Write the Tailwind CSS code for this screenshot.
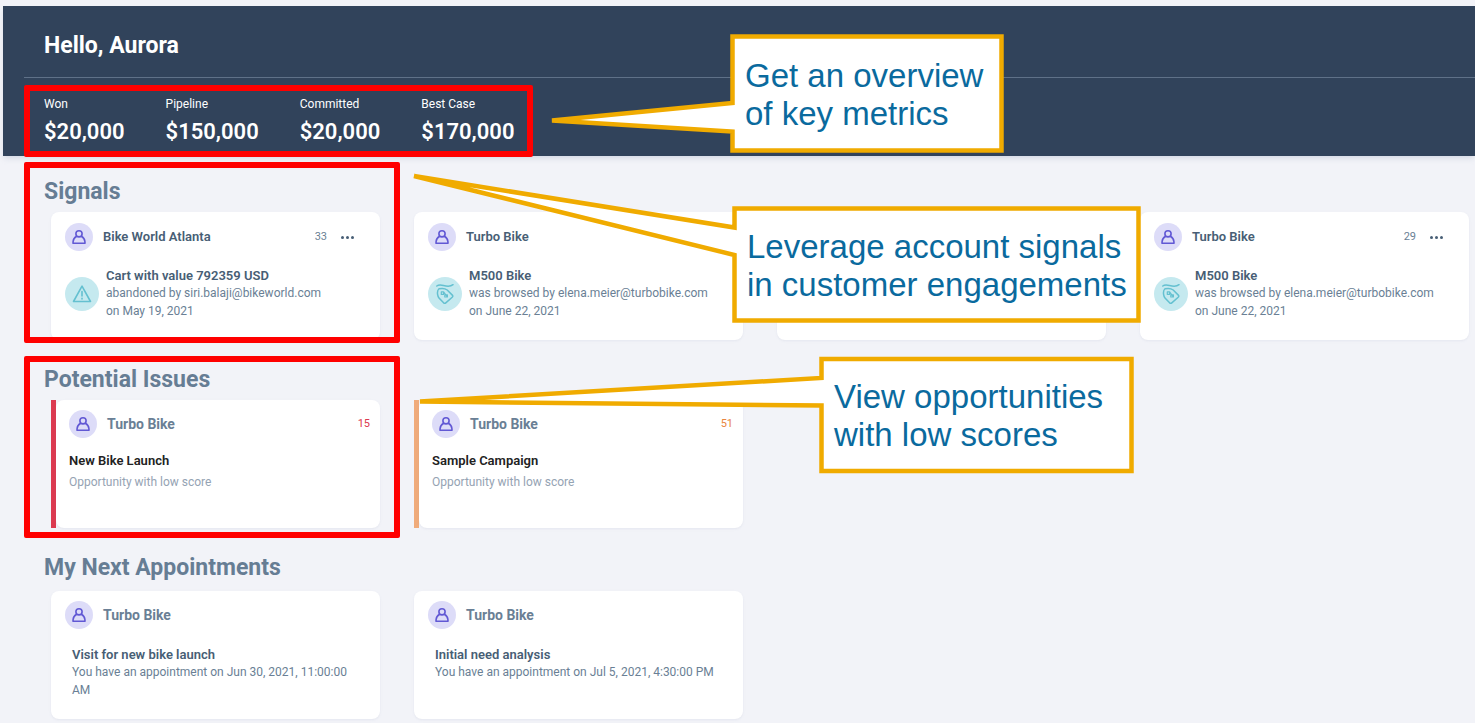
<!DOCTYPE html>
<html lang="en">
<head>
    <meta charset="UTF-8">
    <meta name="viewport" content="width=device-width, initial-scale=1.0">
    <title>Home</title>
    <script src="https://cdn.jsdelivr.net/npm/@tailwindcss/browser@4"></script>
</head>
<body class="relative min-h-screen overflow-x-hidden bg-[#f2f3f8] font-['Roboto',sans-serif] text-[#6a7f95]">
    <!-- Icons -->
    <svg class="hidden">
        <symbol id="icon-person" viewBox="0 0 16 16" fill="none" stroke="currentColor" stroke-width="1.6" stroke-linejoin="round">
            <circle cx="8" cy="4.8" r="3.1" />
            <path d="M5.700 7.200C3.700 8.200 2.300 10 2.100 12.500L2 14.300h12l-.1-1.800c-.2-2.500-1.600-4.300-3.600-5.300" />
        </symbol>
        <symbol id="icon-alert" viewBox="0 0 20 20" fill="none" stroke="currentColor" stroke-width="1.6" stroke-linejoin="round" stroke-linecap="round">
            <path d="M10 2.200 1.500 17.500h17z" />
            <path d="M10 7.500v4.500M10 14.300v.6" />
        </symbol>
        <symbol id="icon-tag" viewBox="0 0 20 20" fill="none" stroke="currentColor" stroke-width="1.500" stroke-linejoin="round" stroke-linecap="round">
            <path d="M1.800 2C3.600.6 5.600.8 8.500 1.500c4 1 7.500.8 9.500-.8" />
            <path d="M4 4.800C2.600 6 2.200 7.800 2.600 10.300c.2 1.600.5 2.600 1.400 3.600l4.600 4.900c.7.800 1.500.8 2.200.1l6.400-5.600c.8-.7.800-1.500.1-2.200L12.200 6C10.300 4.500 7 4.100 4 4.800z" />
            <path d="M6.300 10.400V7.800h2.300l3.800 5.200h-2.600v-2.200M8.600 7.800v2.600H6.300M12.400 13v-2.200h-2.600" stroke-width="1.200" />
        </symbol>
    </svg>

    <header class="relative mt-[6px] ml-[3px] h-[150px] bg-[#31435b] text-white shadow-md shadow-slate-400/20">
        <h1 class="pt-6 pl-[41px] text-[23px] leading-8 font-bold">Hello, Aurora</h1>
        <div class="mt-[15px] ml-[21px] border-t border-[#5f7188] pl-5">
            <dl class="flex gap-[41px] pt-4">
                <div>
                    <dt class="text-xs leading-5">Won</dt>
                    <dd class="mt-1 text-[22px] leading-7 font-semibold">$20,000</dd>
                </div>
                <div>
                    <dt class="text-xs leading-5">Pipeline</dt>
                    <dd class="mt-1 text-[22px] leading-7 font-semibold">$150,000</dd>
                </div>
                <div>
                    <dt class="text-xs leading-5">Committed</dt>
                    <dd class="mt-1 text-[22px] leading-7 font-semibold">$20,000</dd>
                </div>
                <div>
                    <dt class="text-xs leading-5">Best Case</dt>
                    <dd class="mt-1 text-[22px] leading-7 font-semibold">$170,000</dd>
                </div>
            </dl>
        </div>
        <div class="absolute top-[79px] left-[21px] h-[72px] w-[509px] rounded-xs border-6 border-[#ff0000]"></div>
    </header>

    <main class="pr-[6px] pb-1 pl-[51px]">
        <!-- Signals -->
        <section class="relative pt-5">
            <h2 class="-ml-[7px] mb-1 text-[23px] leading-8 font-bold text-[#667d94]">Signals</h2>
            <div class="grid grid-cols-4 gap-[34px]">
                <article class="h-32 rounded-lg bg-white px-[14px] pt-[11px] shadow-sm shadow-slate-400/10">
                    <div class="flex items-center">
                        <span class="grid size-7 place-items-center rounded-full bg-[#dddcf8] text-[#6158d4]"><svg class="size-4"><use href="#icon-person" /></svg></span>
                        <h3 class="ml-[10px] text-[13px] font-semibold text-[#475e75]">Bike World Atlanta</h3>
                        <span class="ml-auto text-[11px]">33</span>
                        <button aria-label="More" class="mr-3 ml-[14px] flex gap-[2px]"><i class="size-[3px] rounded-full bg-[#475e75]"></i><i class="size-[3px] rounded-full bg-[#475e75]"></i><i class="size-[3px] rounded-full bg-[#475e75]"></i></button>
                    </div>
                    <div class="mt-4 flex items-center gap-[7px]">
                        <span class="grid size-[34px] shrink-0 place-items-center rounded-full bg-[#c5e9ef] text-[#64c0d0]"><svg class="size-5"><use href="#icon-alert" /></svg></span>
                        <div class="text-xs">
                            <h4 class="text-[13px] leading-[17px] font-semibold text-[#475e75]">Cart with value 792359 USD</h4>
                            <p class="leading-[18px]">abandoned by siri.balaji@bikeworld.com<br>on May 19, 2021</p>
                        </div>
                    </div>
                </article>
                <article class="h-32 rounded-lg bg-white px-[14px] pt-[11px] shadow-sm shadow-slate-400/10">
                    <div class="flex items-center">
                        <span class="grid size-7 place-items-center rounded-full bg-[#dddcf8] text-[#6158d4]"><svg class="size-4"><use href="#icon-person" /></svg></span>
                        <h3 class="ml-[10px] text-[13px] font-semibold text-[#475e75]">Turbo Bike</h3>
                    </div>
                    <div class="mt-4 flex items-center gap-[7px]">
                        <span class="grid size-[34px] shrink-0 place-items-center rounded-full bg-[#c5e9ef] text-[#64c0d0]"><svg class="size-5"><use href="#icon-tag" /></svg></span>
                        <div class="text-xs">
                            <h4 class="text-[13px] leading-[17px] font-semibold text-[#475e75]">M500 Bike</h4>
                            <p class="leading-[18px]">was browsed by elena.meier@turbobike.com<br>on June 22, 2021</p>
                        </div>
                    </div>
                </article>
                <article class="h-32 rounded-lg bg-white shadow-sm shadow-slate-400/10"></article>
                <article class="h-32 rounded-lg bg-white px-[14px] pt-[11px] shadow-sm shadow-slate-400/10">
                    <div class="flex items-center">
                        <span class="grid size-7 place-items-center rounded-full bg-[#dddcf8] text-[#6158d4]"><svg class="size-4"><use href="#icon-person" /></svg></span>
                        <h3 class="ml-[10px] text-[13px] font-semibold text-[#475e75]">Turbo Bike</h3>
                        <span class="ml-auto text-[11px]">29</span>
                        <button aria-label="More" class="mr-3 ml-[14px] flex gap-[2px]"><i class="size-[3px] rounded-full bg-[#475e75]"></i><i class="size-[3px] rounded-full bg-[#475e75]"></i><i class="size-[3px] rounded-full bg-[#475e75]"></i></button>
                    </div>
                    <div class="mt-4 flex items-center gap-[7px]">
                        <span class="grid size-[34px] shrink-0 place-items-center rounded-full bg-[#c5e9ef] text-[#64c0d0]"><svg class="size-5"><use href="#icon-tag" /></svg></span>
                        <div class="text-xs">
                            <h4 class="text-[13px] leading-[17px] font-semibold text-[#475e75]">M500 Bike</h4>
                            <p class="leading-[18px]">was browsed by elena.meier@turbobike.com<br>on June 22, 2021</p>
                        </div>
                    </div>
                </article>
            </div>
            <div class="absolute top-[6px] -left-[27px] h-[181px] w-[376px] rounded-xs border-6 border-[#ff0000]"></div>
        </section>

        <!-- Potential issues -->
        <section class="relative pt-6">
            <h2 class="-ml-[7px] mb-1 text-[23px] leading-8 font-bold text-[#667d94]">Potential Issues</h2>
            <div class="grid grid-cols-4 gap-[34px]">
                <article class="h-32 bg-[linear-gradient(to_right,#dc3a50_50%,transparent_50%)] bg-[length:10px_100%] bg-no-repeat pl-[5px]">
                    <div class="h-full rounded-lg bg-white pt-[10px] pr-[10px] pl-[13px] shadow-sm shadow-slate-400/10">
                        <div class="flex items-center">
                            <span class="grid size-7 place-items-center rounded-full bg-[#dddcf8] text-[#6158d4]"><svg class="size-4"><use href="#icon-person" /></svg></span>
                            <h3 class="ml-[10px] text-sm font-bold">Turbo Bike</h3>
                            <span class="ml-auto text-[11px] text-[#dc3a50]">15</span>
                        </div>
                        <h4 class="mt-[13px] text-[13px] leading-[20px] font-semibold text-[#222222]">New Bike Launch</h4>
                        <p class="text-xs leading-[22px] text-[#95a3b3]">Opportunity with low score</p>
                    </div>
                </article>
                <article class="h-32 bg-[linear-gradient(to_right,#f0ab7b_50%,transparent_50%)] bg-[length:10px_100%] bg-no-repeat pl-[5px]">
                    <div class="h-full rounded-lg bg-white pt-[10px] pr-[10px] pl-[13px] shadow-sm shadow-slate-400/10">
                        <div class="flex items-center">
                            <span class="grid size-7 place-items-center rounded-full bg-[#dddcf8] text-[#6158d4]"><svg class="size-4"><use href="#icon-person" /></svg></span>
                            <h3 class="ml-[10px] text-sm font-bold">Turbo Bike</h3>
                            <span class="ml-auto text-[11px] text-[#e98540]">51</span>
                        </div>
                        <h4 class="mt-[13px] text-[13px] leading-[20px] font-semibold text-[#222222]">Sample Campaign</h4>
                        <p class="text-xs leading-[22px] text-[#95a3b3]">Opportunity with low score</p>
                    </div>
                </article>
            </div>
            <div class="absolute top-4 -left-[27px] h-[182px] w-[376px] rounded-xs border-6 border-[#ff0000]"></div>
        </section>

        <!-- Appointments -->
        <section class="pt-6">
            <h2 class="-ml-[7px] mb-[7px] text-[23px] leading-8 font-bold text-[#667d94]">My Next Appointments</h2>
            <div class="grid grid-cols-4 gap-[34px]">
                <article class="h-32 rounded-lg bg-white px-[14px] pt-[10px] shadow-sm shadow-slate-400/10">
                    <div class="flex items-center">
                        <span class="grid size-7 place-items-center rounded-full bg-[#dddcf8] text-[#6158d4]"><svg class="size-4"><use href="#icon-person" /></svg></span>
                        <h3 class="ml-[10px] text-sm font-bold">Turbo Bike</h3>
                    </div>
                    <div class="mt-[17px] px-[7px] text-xs">
                        <h4 class="text-[13px] leading-[17px] font-semibold text-[#475e75]">Visit for new bike launch</h4>
                        <p class="leading-[18px]">You have an appointment on Jun 30, 2021, 11:00:00 AM</p>
                    </div>
                </article>
                <article class="h-32 rounded-lg bg-white px-[14px] pt-[10px] shadow-sm shadow-slate-400/10">
                    <div class="flex items-center">
                        <span class="grid size-7 place-items-center rounded-full bg-[#dddcf8] text-[#6158d4]"><svg class="size-4"><use href="#icon-person" /></svg></span>
                        <h3 class="ml-[10px] text-sm font-bold">Turbo Bike</h3>
                    </div>
                    <div class="mt-[17px] px-[7px] text-xs">
                        <h4 class="text-[13px] leading-[17px] font-semibold text-[#475e75]">Initial need analysis</h4>
                        <p class="leading-[18px]">You have an appointment on Jul 5, 2021, 4:30:00 PM</p>
                    </div>
                </article>
            </div>
        </section>
    </main>

    <!-- Callouts: the outline with its pointer is one shape, drawn under the text -->
    <div class="absolute top-[34px] left-[730px] h-[119px] w-[274px] font-['Liberation_Sans',sans-serif] text-[33px] leading-[38px] text-[#0a6a9e]">
        <svg class="absolute inset-0 overflow-visible" width="274" height="119" fill="#fff" stroke="#f0ab00" stroke-width="4.500">
            <path d="M2.500 2.500H271.500V116.500H2.500V97.500L-178 86.500L2.500 69V2.500Z" />
        </svg>
        <p class="relative px-[15px] pt-[23px] whitespace-nowrap">Get an overview<br>of key metrics</p>
    </div>
    <div class="absolute top-[206px] left-[732px] h-[117px] w-[409px] font-['Liberation_Sans',sans-serif] text-[33px] leading-[38px] text-[#0a6a9e]">
        <svg class="absolute inset-0 overflow-visible" width="409" height="117" fill="#fff" stroke="#f0ab00" stroke-width="4.500">
            <path d="M2.500 2.500H406.500V114.500H2.500V49L-318 -30L2.500 21.500V2.500Z" />
        </svg>
        <p class="relative px-[15px] pt-[22px] whitespace-nowrap">Leverage account signals<br>in customer engagements</p>
    </div>
    <div class="absolute top-[356px] left-[819px] h-[117px] w-[315px] font-['Liberation_Sans',sans-serif] text-[33px] leading-[38px] text-[#0a6a9e]">
        <svg class="absolute inset-0 overflow-visible" width="315" height="117" fill="#fff" stroke="#f0ab00" stroke-width="4.500">
            <path d="M2.500 3H312.500V115H2.500V49.500L-399 45.500L2.500 22V3Z" />
        </svg>
        <p class="relative px-[15px] pt-[22px] whitespace-nowrap">View opportunities<br>with low scores</p>
    </div>
</body>
</html>
